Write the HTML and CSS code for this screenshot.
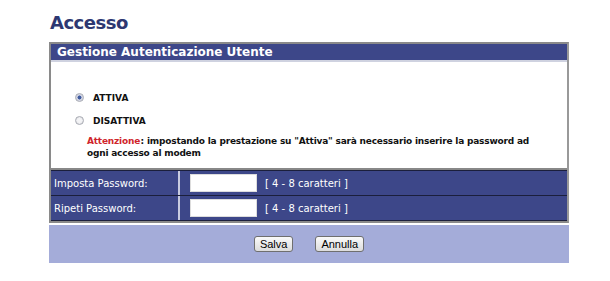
FILE: index.html
```html
<!DOCTYPE html>
<html lang="it">
<head>
    <meta charset="UTF-8">
    <title>Accesso</title>
    <link rel="stylesheet" href="styles.css">
</head>
<body>
<div class="page">
    <h1 class="title">Accesso</h1>
    <div class="box">
        <div class="box-head">Gestione Autenticazione Utente</div>
        <div class="box-body">
            <label class="opt"><input type="radio" name="auth" checked> ATTIVA</label>
            <label class="opt"><input type="radio" name="auth"> DISATTIVA</label>
            <div class="note">
                <div><span class="warn">Attenzione</span><span>: impostando la prestazione su "Attiva" sarà necessario inserire la password ad</span></div>
                <div>ogni accesso al modem</div>
            </div>
        </div>
        <div class="row">
            <div class="cell-label">Imposta Password:</div>
            <div class="cell-field"><input type="password" class="pwd"> <span>[ 4 - 8 caratteri ]</span></div>
        </div>
        <div class="row">
            <div class="cell-label">Ripeti Password:</div>
            <div class="cell-field"><input type="password" class="pwd"> <span>[ 4 - 8 caratteri ]</span></div>
        </div>
    </div>
    <div class="actions">
        <button class="btn">Salva</button>
        <button class="btn">Annulla</button>
    </div>
</div>
</body>
</html>
```

FILE: styles.css
```css
body {
    margin: 0;
    background: #fff;
    font-family: "DejaVu Sans", Verdana, sans-serif;
}
.page {
    width: 520px;
    padding: 12px 0 0 49px;
}
.title {
    margin: 0 0 9px 1px;
    font-size: 18px;
    line-height: 21px;
    color: #2d3872;
    letter-spacing: -0.5px;
}
.box {
    border: 2px solid #8a8a8a;
    border-right-color: #999;
}
.box-head {
    background: #3d4789;
    color: #fff;
    font-weight: bold;
    font-size: 12px;
    line-height: 16px;
    padding: 0 6px;
    border-bottom: 2px solid #cfd2e0;
}
.box-body {
    background: #fff;
    padding: 24px 20px 9px 24px;
    font-size: 9px;
    font-weight: bold;
    color: #111;
    border-bottom: 2px solid #888;
}
.opt {
    display: flex;
    align-items: center;
    gap: 9px;
    height: 23px;
}
.opt input {
    appearance: none;
    margin: 0;
    width: 9px;
    height: 9px;
    border-radius: 50%;
    border: 1px solid #a9abb3;
    background: radial-gradient(circle, #f4f4f6 40%, #d2d4da 100%);
}
.opt input:checked {
    background: radial-gradient(circle, #3e5a9e 0 35%, #c9cde0 45%, #e9eaef 100%);
}
.note {
    margin: 3px 0 0 12px;
    line-height: 12px;
    letter-spacing: -0.2px;
    white-space: nowrap;
}
.warn {
    color: #d0252b;
    padding-right: 0.5px;
}
.row {
    display: flex;
    background: #3d4789;
    color: #fff;
    font-size: 10px;
    border-bottom: 1px solid #1b1f3c;
    border-top: 1px solid #1b1f3c;
}
.row + .row {
    border-top: 0;
}
.cell-label {
    width: 124px;
    padding-left: 3px;
    display: flex;
    align-items: center;
    border-right: 2px solid #c8cbe0;
    height: 24px;
}
.cell-field {
    display: flex;
    align-items: center;
    gap: 8px;
    padding-left: 10px;
}
.pwd {
    width: 67px;
    height: 18px;
    box-sizing: border-box;
    border: 1px solid #ddd;
    background: #fff;
    padding: 0;
}
.actions {
    margin-top: 2px;
    background: #a4acd9;
    height: 38px;
    display: flex;
    justify-content: center;
    align-items: center;
    gap: 22px;
}
.btn {
    font-family: "Liberation Sans", Arial, sans-serif;
    font-size: 11px;
    padding: 1px 5px;
    border: 1px solid #6f6f6f;
    border-radius: 3px;
    background: linear-gradient(#fafafa, #dcdcdc);
    color: #000;
}
```
